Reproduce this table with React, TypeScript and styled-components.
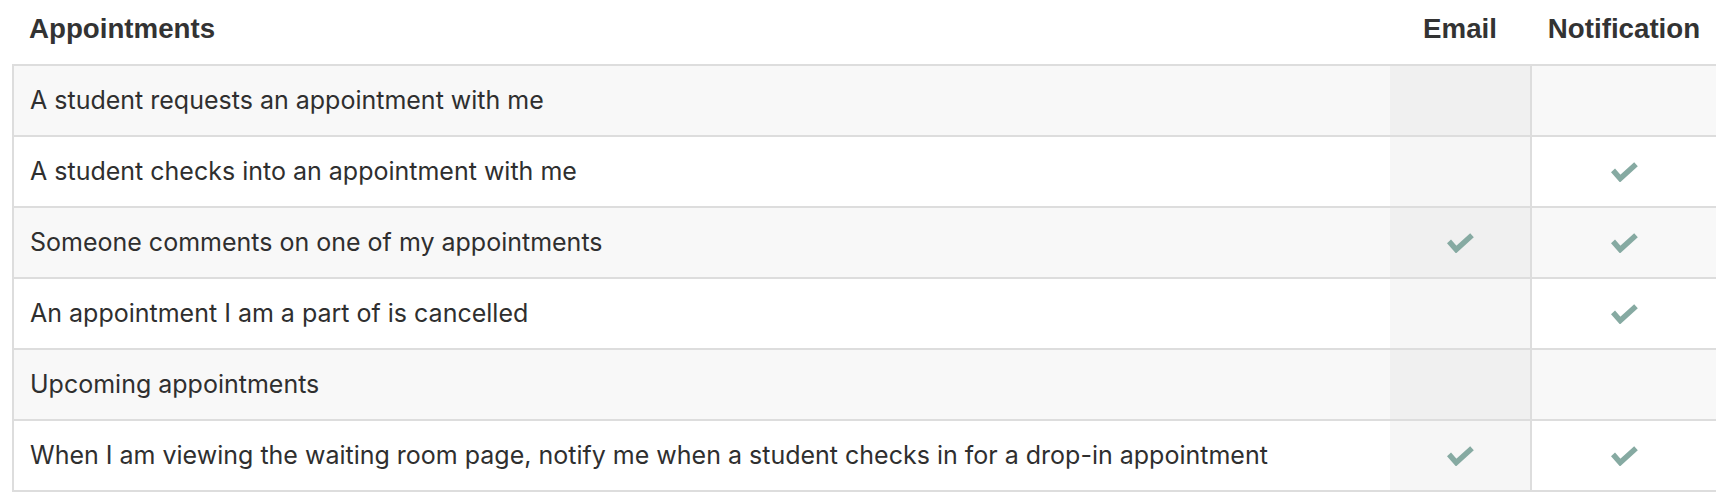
import React from "react";
import styled, { createGlobalStyle } from "styled-components";

const GlobalStyle = createGlobalStyle`
  html, body { margin: 0; padding: 0; background: #ffffff; }
  body { font-family: Inter, "Noto Sans", sans-serif; color: #2e2e2e; }
`;

const Page = styled.div`
  padding: 0 12px;
`;

const HeaderRow = styled.div`
  display: grid;
  grid-template-columns: 1fr 140px 186px;
  height: 64px;
  box-sizing: border-box;
  padding-top: 13px;
`;

const HeaderCell = styled.div<{ $center?: boolean }>`
  font-family: "Liberation Sans", Arial, sans-serif;
  font-weight: 700;
  font-size: 27.7px;
  line-height: 32px;
  color: #333333;
  white-space: nowrap;
  text-align: ${(p) => (p.$center ? "center" : "left")};
  padding-left: ${(p) => (p.$center ? "0" : "17px")};
`;

const HeaderNotif = styled(HeaderCell)`
  padding-left: 2px;
`;

const Table = styled.div`
  border-left: 2px solid #dddddd;
  border-bottom: 2px solid #dddddd;
`;

const Row = styled.div<{ $odd: boolean }>`
  display: grid;
  grid-template-columns: 1fr 140px 186px;
  height: 71px;
  box-sizing: border-box;
  border-top: 2px solid #dddddd;
  background: ${(p) => (p.$odd ? "#f8f8f8" : "#ffffff")};
`;

const LabelCell = styled.div`
  display: flex;
  align-items: center;
  padding: 0 0 1px 16px;
  font-size: 25px;
  line-height: 30px;
  color: #2f2f2f;
  white-space: nowrap;
`;

const EmailCell = styled.div<{ $odd: boolean }>`
  display: flex;
  align-items: center;
  justify-content: center;
  background: ${(p) => (p.$odd ? "#f0f0f0" : "#f6f6f6")};
`;

const NotifCell = styled.div`
  display: flex;
  align-items: center;
  justify-content: center;
  border-left: 2px solid #dddddd;
`;

const Check = () => (
  <svg width="27" height="20" viewBox="0 0 27 20" fill="none" aria-hidden="true">
    <path d="M2 8.4 L9.2 16.6 L25 2.2" stroke="#86AAA2" strokeWidth="5.4" strokeLinejoin="miter" />
  </svg>
);

const rows: { label: string; email: boolean; notif: boolean }[] = [
  { label: "A student requests an appointment with me", email: false, notif: false },
  { label: "A student checks into an appointment with me", email: false, notif: true },
  { label: "Someone comments on one of my appointments", email: true, notif: true },
  { label: "An appointment I am a part of is cancelled", email: false, notif: true },
  { label: "Upcoming appointments", email: false, notif: false },
  {
    label:
      "When I am viewing the waiting room page, notify me when a student checks in for a drop-in appointment",
    email: true,
    notif: true,
  },
];

export default function App() {
  return (
    <>
      <GlobalStyle />
      <Page>
        <HeaderRow>
          <HeaderCell>Appointments</HeaderCell>
          <HeaderCell $center>Email</HeaderCell>
          <HeaderNotif $center>Notification</HeaderNotif>
        </HeaderRow>
        <Table>
          {rows.map((r, i) => {
            const odd = i % 2 === 0;
            return (
              <Row key={r.label} $odd={odd}>
                <LabelCell>{r.label}</LabelCell>
                <EmailCell $odd={odd}>{r.email && <Check />}</EmailCell>
                <NotifCell>{r.notif && <Check />}</NotifCell>
              </Row>
            );
          })}
        </Table>
      </Page>
    </>
  );
}
